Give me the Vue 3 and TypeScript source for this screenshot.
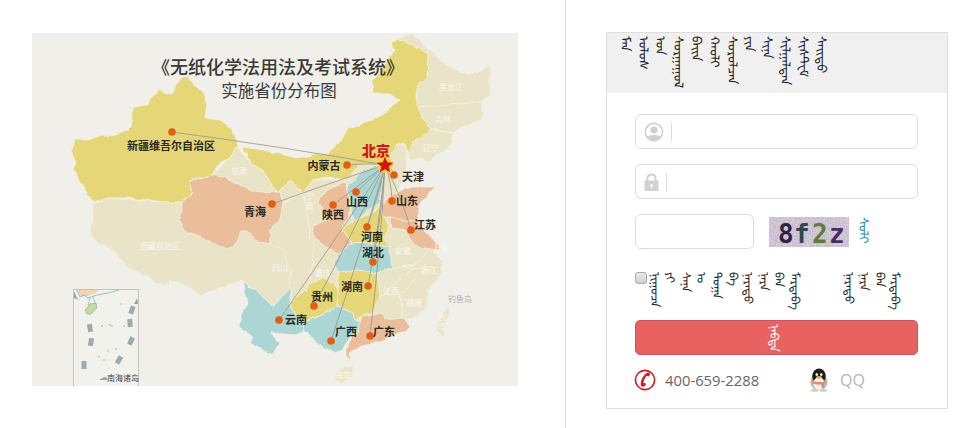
<script setup lang="ts">
import { ref } from 'vue'

interface Spot { name: string; x: number; y: number; lx: number; ly: number }

const username = ref('')
const password = ref('')
const captcha = ref('')
const remember = ref(false)

const beige = '#e9e4c8'
const yellow = '#e5d678'
const peach = '#eabd9b'
const teal = '#abd6d4'

const regions: { fill: string; d: string }[] = [
  // tibet, sichuan, gansu, hebei, anhui, zhejiang, jiangxi, fujian
  { fill: beige, d: 'M95 205L107 198L163 202L182 202L190 180L212 175L230 158L238 145L250 163L263 170L277 193L290 180L303 193L313 180L347 180L360 165L390 157L397 143L405 147L407 165L405 178L398 190L390 215L403 230L438 242L433 253L440 258L443 260L440 275L430 290L427 307L413 318L385 322L345 326L300 322L290 302L290 287L273 307L257 290L250 288L243 282L220 288L200 295L190 288L170 280L165 287L153 280L127 267L110 248L97 243L90 230Z' },
  // north east
  { fill: beige, d: 'M398 38L412 34L437 57L460 73L477 73L490 65L490 93L482 102L482 120L467 125L453 133L452 145L427 162L420 157L410 160L405 147L413 143L430 130L417 107L417 87L427 77L428 53Z' },
  // xinjiang
  { fill: yellow, d: 'M71 152L75 140L88 140L97 137L113 135L127 130L133 120L132 106L148 105L150 98L158 90L172 95L175 83L188 76L193 83L203 93L207 105L205 118L220 120L230 127L235 137L238 145L230 158L217 165L212 175L190 180L193 193L182 202L163 202L130 198L107 198L95 203L83 187L78 177L72 170L77 162Z' },
  // inner mongolia
  { fill: yellow, d: 'M392 43L398 38L428 53L427 77L417 87L417 107L430 130L413 143L407 153L405 145L397 143L390 157L377 163L360 165L347 180L327 177L313 180L303 193L290 180L277 193L263 170L250 163L243 147L263 150L297 158L327 153L340 143L348 128L380 117L400 100L390 93L373 93L372 83L382 67L395 50Z' },
  // qinghai
  { fill: peach, d: 'M190 180L212 175L227 178L240 185L260 193L280 192L283 203L280 220L270 230L270 243L263 243L242 230L233 248L227 250L207 240L187 233L178 220L182 210L182 202L193 193Z' },
  // shaanxi
  { fill: peach, d: 'M320 197L333 187L347 182L348 193L352 207L345 222L343 230L352 243L340 253L330 250L313 237L313 225L327 220L327 213L318 203Z' },
  // shandong
  { fill: peach, d: 'M388 198L400 190L413 187L435 187L423 200L418 205L418 222L390 218L383 218L380 208Z' },
  // jiangsu
  { fill: peach, d: 'M390 218L418 222L423 230L437 243L438 250L423 248L412 243L405 230L393 228Z' },
  // shanxi
  { fill: teal, d: 'M373 165L362 172L348 187L348 193L352 207L353 222L370 208L380 203L383 183L378 167Z' },
  // henan
  { fill: yellow, d: 'M343 230L358 218L380 208L383 218L390 225L383 238L390 247L377 245L363 242L352 243Z' },
  // hubei
  { fill: teal, d: 'M333 262L340 253L352 243L363 242L377 245L390 247L390 260L393 268L377 273L357 270L338 273Z' },
  // hunan
  { fill: yellow, d: 'M338 273L357 270L377 273L380 297L370 313L355 320L353 313L338 307L338 290Z' },
  // guizhou
  { fill: yellow, d: 'M290 302L307 290L310 283L323 278L333 283L338 290L338 307L323 313L310 318L303 322L293 310Z' },
  // yunnan
  { fill: teal, d: 'M243 282L250 288L257 290L273 307L290 287L290 302L293 310L303 322L305 330L297 335L270 333L280 343L273 355L262 350L250 343L253 337L238 327L243 310L248 302Z' },
  // guangxi
  { fill: teal, d: 'M303 322L323 313L338 307L353 313L355 320L363 322L357 333L350 340L337 353L317 343L305 330Z' },
  // guangdong
  { fill: peach, d: 'M363 317L383 313L385 320L403 318L410 328L383 340L360 347L348 353L350 362L345 357L345 350L357 333Z' },
  // hainan, taiwan
  { fill: beige, d: 'M335 372L345 366L354 367L351 378L342 383L335 380Z' },
  { fill: beige, d: 'M437 323L447 307L449 312L443 338L435 330Z' }
]

const borders = [
  'M263 243L270 243L283 250L290 270L290 287',
  'M283 203L303 193L310 230L308 240',
  'M315 245L310 283',
  'M393 268L415 265L430 250',
  'M380 297L395 282L413 268L430 270',
  'M403 318L400 295L415 280',
  'M417 107L447 105L482 102',
  'M430 130L453 133'
]

const spots: Spot[] = [
  { name: '新疆维吾尔自治区', x: 172, y: 132, lx: 171, ly: 146 },
  { name: '青海', x: 272, y: 204, lx: 255, ly: 212 },
  { name: '内蒙古', x: 347, y: 165, lx: 324, ly: 166 },
  { name: '天津', x: 394, y: 175, lx: 413, ly: 177 },
  { name: '山西', x: 356, y: 192, lx: 357, ly: 202 },
  { name: '陕西', x: 333, y: 205, lx: 333, ly: 215 },
  { name: '山东', x: 392, y: 201, lx: 407, ly: 201 },
  { name: '河南', x: 367, y: 227, lx: 372, ly: 237 },
  { name: '江苏', x: 411, y: 230, lx: 425, ly: 225 },
  { name: '湖北', x: 373, y: 262, lx: 373, ly: 253 },
  { name: '湖南', x: 368, y: 286, lx: 352, ly: 287 },
  { name: '贵州', x: 314, y: 306, lx: 322, ly: 297 },
  { name: '云南', x: 279, y: 320, lx: 296, ly: 320 },
  { name: '广西', x: 331, y: 341, lx: 346, ly: 332 },
  { name: '广东', x: 370, y: 336, lx: 384, ly: 332 }
]

const faint = [
  { name: '甘肃', x: 239, y: 171 },
  { name: '黑龙江', x: 451, y: 87 },
  { name: '吉林', x: 443, y: 119 },
  { name: '辽宁', x: 431, y: 148 },
  { name: '西藏自治区', x: 160, y: 246 },
  { name: '四川', x: 280, y: 268 },
  { name: '重庆', x: 323, y: 273 },
  { name: '安徽', x: 403, y: 251 },
  { name: '上海', x: 440, y: 248 },
  { name: '浙江', x: 429, y: 270 },
  { name: '江西', x: 391, y: 291 },
  { name: '福建', x: 414, y: 303 },
  { name: '海南', x: 343, y: 375 }
]

const islands = [
  [132, 310, 20], [130, 323, -5], [90, 328, -10], [131, 341, 25], [91, 342, 10], [119, 360, 30], [84, 365, 0]
]
const dots = [[102, 326], [110, 325], [112, 326], [124, 326], [121, 304], [108, 351], [99, 357], [116, 349], [104, 360]]

const starPath = 'M385 156.5L387.3 162.3L393.5 162.7L388.7 166.6L390.3 172.6L385 169.3L379.7 172.6L381.3 166.6L376.5 162.7L382.7 162.3Z'

const lineTo = (s: Spot) => {
  const mx = (s.x + 385) / 2
  const my = (s.y + 165) / 2
  return `M385 165Q${mx + 3} ${my - 2} ${s.x} ${s.y}`
}

const titleWords = ['ᠮᠠᠨ', 'ᠤᠯᠤᠰ', 'ᠤᠨ', 'ᠰᠤᠷᠭᠠᠭᠤᠯ', 'ᠪᠠᠢᠨ', 'ᠬᠠᠤᠯᠢ', 'ᠰᠤᠷᠤᠯᠴᠠᠨ', 'ᠶᠢᠨ', 'ᠰᠢᠨᠡ', 'ᠰᠢᠯᠭᠠᠯᠲᠠᠨ', 'ᠰᠢᠰᠲᠧᠮ', 'ᠰᠠᠢᠲᠤ']
const rememberWords = ['ᠨᠢᠭᠤᠴᠠ', 'ᠶᠢ', 'ᠰᠠᠨᠠ', 'ᠤ', 'ᠲᠣᠭᠠ', 'ᠪᠠ', 'ᠨᠡᠷᠡᠳᠦ', 'ᠨᠡᠷᠡ', 'ᠪᠡᠨ', 'ᠮᠠᠷᠲᠠᠪᠠ']
const forgetWords = ['ᠨᠡᠷᠡᠳᠦ', 'ᠨᠡᠷᠡ', 'ᠪᠡᠨ', 'ᠮᠠᠷᠲᠠᠪᠠ']
</script>

<template>
  <div class="page">
    <section class="map-side">
      <svg class="map" viewBox="32 33 486 353" width="486" height="353">
        <defs>
          <filter id="organic" filterUnits="userSpaceOnUse" x="32" y="33" width="486" height="353">
            <feTurbulence type="fractalNoise" baseFrequency="0.09" numOctaves="2" seed="3" />
            <feDisplacementMap in="SourceGraphic" scale="5" xChannelSelector="R" yChannelSelector="G" />
            <feGaussianBlur stdDeviation="0.35" />
          </filter>
        </defs>
        <rect x="32" y="33" width="486" height="353" fill="#f0efe9" />
        <g filter="url(#organic)">
          <path v-for="(r, i) in regions" :key="i" :d="r.d" :fill="r.fill" stroke="#f4f1e2" stroke-width="0.8" stroke-linejoin="round" />
          <path v-for="(b, i) in borders" :key="'b' + i" :d="b" fill="none" stroke="#f7f5ea" stroke-width="0.8" />
        </g>

        <text x="278" y="74" class="map-title" text-anchor="middle">《无纸化学法用法及考试系统》</text>
        <text x="279" y="97" class="map-sub" text-anchor="middle">实施省份分布图</text>

        <text v-for="f in faint" :key="f.name" :x="f.x" :y="f.y + 3" class="faint" text-anchor="middle">{{ f.name }}</text>
        <text x="310" y="199" class="faint" text-anchor="middle">宁</text>
        <text x="310" y="209" class="faint" text-anchor="middle">夏</text>
        <text x="442" y="320" class="faint" text-anchor="middle">台</text>
        <text x="442" y="330" class="faint" text-anchor="middle">湾</text>
        <text x="460" y="302" class="diaoyu" text-anchor="middle">钓鱼岛</text>

        <path v-for="s in spots" :key="'l' + s.name" :d="lineTo(s)" fill="none" stroke="#96968e" stroke-width="0.8" />
        <circle v-for="s in spots" :key="'c' + s.name" :cx="s.x" :cy="s.y" r="3.8" fill="#e25f12" />
        <text v-for="s in spots" :key="'t' + s.name" :x="s.lx" :y="s.ly + 4" class="prov" text-anchor="middle">{{ s.name }}</text>

        <text x="376" y="156" class="capital" text-anchor="middle">北京</text>
        <circle cx="385" cy="165" r="8" fill="#f5d93c" />
        <path :d="starPath" fill="#d8121a" />

        <!-- south china sea inset -->
        <g>
          <rect x="73.5" y="289.5" width="65" height="97" fill="#f1f2ec" stroke="#c4c4bc" />
          <path d="M77 290H99L96 293L88 296H81Z" fill="#f0d4b4" />
          <path d="M77 290L80 297L84 295L88 298L97 295L108 293L119 290" fill="none" stroke="#7fb3ad" stroke-width="0.8" />
          <path d="M90 298L88 305L96 305L93 297" fill="none" stroke="#7fc0c4" stroke-width="0.7" />
          <path d="M85 310L90 304L96 303L97 308L91 314L87 314Z" fill="#c9d99e" stroke="#7fb8a8" stroke-width="0.7" />
          <path d="M74 291L77 298L80 300L74 298Z M137 298L134 304L138 304Z" fill="#93a4a6" />
          <rect v-for="(p, i) in islands" :key="i" :x="p[0] - 2.5" :y="p[1] - 4" width="5" height="8" fill="#8f9fa3" fill-opacity="0.85" :transform="`rotate(${p[2]} ${p[0]} ${p[1]})`" />
          <circle v-for="(p, i) in dots" :key="'d' + i" :cx="p[0]" :cy="p[1]" r="0.8" fill="#9aa8a8" />
          <path d="M100 379L105 377L107 378V380H100Z" fill="#93a4a6" />
          <text x="123" y="381" class="inset-label" text-anchor="middle">南海诸岛</text>
        </g>
      </svg>
    </section>

    <section class="login-side">
      <div class="box">
        <header class="box-head">
          <span v-for="(w, i) in titleWords" :key="i" class="mong">{{ w }}</span>
        </header>

        <form class="form" @submit.prevent>
          <label class="field">
            <svg width="20" height="20" viewBox="0 0 20 20">
              <circle cx="10" cy="10" r="8.6" fill="none" stroke="#cfcfcf" stroke-width="1.6" />
              <circle cx="10" cy="8" r="3.6" fill="#cfcfcf" />
              <path d="M3.8 14.6C6 12.6 14 12.6 16.2 14.6C14.6 17 12.4 18 10 18C7.6 18 5.4 17 3.8 14.6Z" fill="#cfcfcf" />
            </svg>
            <i class="sep"></i>
            <input v-model="username" type="text" />
          </label>

          <label class="field">
            <svg width="15" height="18" viewBox="0 0 15 18">
              <path d="M3.4 8V5.4C3.4 3 5.2 1.4 7.5 1.4C9.8 1.4 11.6 3 11.6 5.4V8" fill="none" stroke="#d2d2d2" stroke-width="2" />
              <rect x="0.5" y="7.5" width="14" height="10.5" rx="0.8" fill="#d2d2d2" />
              <rect x="6.5" y="11" width="2" height="3.4" fill="#fff" />
            </svg>
            <i class="sep"></i>
            <input v-model="password" type="password" />
          </label>

          <div class="code-row">
            <input v-model="captcha" class="code-input" type="text" />
            <svg class="captcha" width="80" height="30" viewBox="0 0 80 30">
              <defs>
                <filter id="noise" x="0" y="0" width="100%" height="100%">
                  <feTurbulence type="fractalNoise" baseFrequency="0.8" numOctaves="2" seed="8" />
                  <feColorMatrix type="matrix" values="0 0 0 0 0.52  0 0 0 0 0.52  0 0 0 0 0.54  7 0 0 0 -3.1" />
                </filter>
              </defs>
              <rect width="80" height="30" fill="#dcc8e2" />
              <rect width="80" height="30" filter="url(#noise)" />
              <text x="9" y="26" class="cap" fill="#2f2244">8</text>
              <text x="25" y="26" class="cap" fill="#2c4a50">f</text>
              <text x="43" y="26" class="cap" fill="#647a3a">2</text>
              <text x="60" y="26" class="cap" fill="#4a2c60">z</text>
            </svg>
            <a class="mong change" href="#" @click.prevent>ᠰᠣᠯᠢ</a>
          </div>

          <div class="remember">
            <input v-model="remember" type="checkbox" />
            <div class="words">
              <span v-for="(w, i) in rememberWords" :key="i" class="mong">{{ w }}</span>
            </div>
            <a class="words forget" href="#" @click.prevent>
              <span v-for="(w, i) in forgetWords" :key="i" class="mong">{{ w }}</span>
            </a>
          </div>

          <button class="submit" type="submit"><span class="mong">ᠨᠡᠪᠲᠡ</span></button>
        </form>

        <footer class="contact">
          <span class="tel">
            <svg width="22" height="22" viewBox="0 0 22 22">
              <circle cx="11" cy="11" r="9.6" fill="none" stroke="#d3191f" stroke-width="1.6" />
              <path d="M14.6 3.6C16 3.8 16.4 5.4 15.6 6.6L14.6 7.6L12.6 6.8C10.8 9 9.6 11.6 9.4 14L11.6 14.2L11.8 15.8C11 17.4 8.6 18.4 7.4 17.2C5.8 15 7.6 9.6 9.6 7C11 5.2 13 3.6 14.6 3.6Z" fill="#d3191f" />
            </svg>
            400-659-2288
          </span>
          <span class="qq">
            <svg width="22" height="24" viewBox="0 0 22 24">
              <ellipse cx="11" cy="14" rx="8.5" ry="8.5" fill="#b8b8b8" />
              <ellipse cx="11" cy="8" rx="6.8" ry="7.5" fill="#1c1c1c" />
              <ellipse cx="11" cy="15.5" rx="5.6" ry="6.4" fill="#f7f3ea" />
              <circle cx="8.8" cy="6.6" r="1.3" fill="#fff" />
              <circle cx="13.2" cy="6.6" r="1.3" fill="#fff" />
              <ellipse cx="11" cy="9.4" rx="3" ry="1.3" fill="#eeb12e" />
              <path d="M4 12.4C8 14.6 14 14.6 18 12.4L18 15C14 17 8 17 4 15Z" fill="#e08a7c" />
              <path d="M13 15H16.4L16 20.4L13.6 19.6Z" fill="#e08a7c" />
              <ellipse cx="6.6" cy="22.4" rx="3.6" ry="1.3" fill="#d6cfbc" />
              <ellipse cx="15.4" cy="22.4" rx="3.6" ry="1.3" fill="#d6cfbc" />
            </svg>
            <em>QQ</em>
          </span>
        </footer>
      </div>
    </section>
  </div>
</template>

<style scoped>
.page {
  display: flex;
  width: 968px;
  height: 428px;
  overflow: hidden;
  background: #fff;
  font-family: "Open Sans", "Noto Sans CJK SC", sans-serif;
}

.map-side {
  width: 566px;
  box-sizing: border-box;
  padding: 33px 0 0 32px;
  border-right: 1px solid #e2e2e2;
}

.map {
  display: block;
}

.map-title {
  font-family: "Noto Sans CJK SC", sans-serif;
  font-size: 18px;
  font-weight: 500;
  fill: #3a3a36;
}

.map-sub {
  font-family: "Noto Sans CJK SC", sans-serif;
  font-size: 16.5px;
  fill: #3a3a36;
}

.prov {
  font-family: "Noto Sans CJK SC", sans-serif;
  font-size: 11px;
  font-weight: 700;
  fill: #2b2a22;
}

.capital {
  font-family: "Noto Sans CJK SC", sans-serif;
  font-size: 14px;
  font-weight: 900;
  fill: #d3141c;
}

.faint {
  font-family: "Noto Sans CJK SC", sans-serif;
  font-size: 8px;
  fill: #faf8ee;
}

.diaoyu {
  font-family: "Noto Sans CJK SC", sans-serif;
  font-size: 8px;
  fill: #b3b2a9;
}

.inset-label {
  font-family: "Noto Sans CJK SC", sans-serif;
  font-size: 8px;
  fill: #44443e;
}

.login-side {
  padding: 32px 0 0 40px;
}

.box {
  width: 342px;
  height: 377px;
  box-sizing: border-box;
  border: 1px solid #dedede;
  display: flex;
  flex-direction: column;
}

.box-head {
  display: flex;
  height: 60px;
  flex-shrink: 0;
  padding: 3px 0 0 12px;
  background: #f0f0f0;
  box-sizing: border-box;
  color: #222;
}

.mong {
  width: 17.8px;
  writing-mode: vertical-lr;
  font-family: "Noto Sans Mongolian", "Noto Sans", sans-serif;
  font-size: 13px;
  line-height: 17.8px;
  white-space: nowrap;
}

.form {
  display: flex;
  flex-direction: column;
  padding: 21px 29px 0 28px;
}

.field {
  display: flex;
  align-items: center;
  height: 35px;
  box-sizing: border-box;
  margin-bottom: 15px;
  padding-left: 8px;
  border: 1px solid #dcdcdc;
  border-radius: 6px;
}

.field svg {
  flex-shrink: 0;
}

.sep {
  width: 1px;
  height: 18px;
  margin-left: 7px;
  background: #dcdcdc;
}

input[type='text'],
input[type='password'] {
  min-width: 0;
  border: 0;
  outline: 0;
  background: transparent;
}

.field input {
  flex: 1;
  height: 100%;
  padding: 0 6px;
}

.code-row {
  display: flex;
  align-items: center;
  height: 35px;
}

.code-input {
  width: 119px;
  height: 35px;
  box-sizing: border-box;
  padding: 0 8px;
  border: 1px solid #dcdcdc !important;
  border-radius: 6px;
}

.captcha {
  margin-left: 15px;
  overflow: visible;
}

.cap {
  font-family: "DejaVu Sans Mono", monospace;
  font-size: 26px;
  font-weight: 700;
}

.change {
  margin-left: 8px;
  color: #2a8fc4;
  text-decoration: none;
  height: 30px;
}

.remember {
  display: flex;
  align-items: flex-start;
  height: 71px;
  padding-top: 23px;
  box-sizing: border-box;
  color: #222;
}

.remember input {
  width: 12px;
  height: 12px;
  margin: 0 2px 0 0;
  flex-shrink: 0;
  appearance: none;
  border: 1px solid #a9a9a9;
  border-radius: 3px;
  background: linear-gradient(#ececec, #cfcfcf);
}

.words {
  display: flex;
}

.words .mong {
  width: 15.6px;
  font-size: 12px;
  line-height: 15.6px;
}

.forget {
  margin-left: 38px;
  color: #222;
  text-decoration: none;
}

.submit {
  display: flex;
  align-items: center;
  justify-content: center;
  height: 35px;
  padding: 0;
  border: 1px solid #c9555b;
  border-radius: 5px;
  background: #e86262;
  color: #fff;
}

.submit .mong {
  font-size: 12px;
}

.contact {
  display: flex;
  align-items: center;
  margin-top: 13px;
  padding-left: 27px;
  font-size: 14.8px;
  color: #666;
}

.tel {
  display: flex;
  align-items: center;
  gap: 9px;
  width: 174px;
}

.qq {
  display: flex;
  align-items: center;
  gap: 10px;
}

.qq em {
  font-style: normal;
  font-size: 16px;
  color: #b4b4b4;
}
</style>
